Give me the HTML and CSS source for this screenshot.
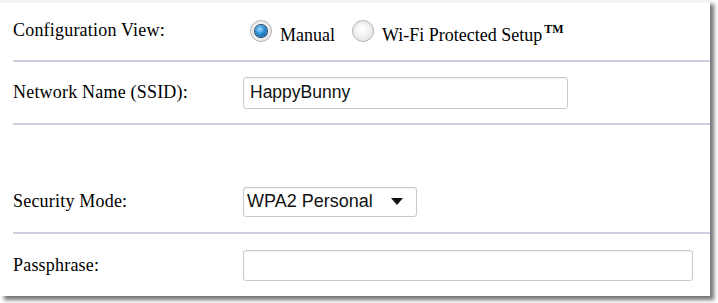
FILE: index.html
```html
<!DOCTYPE html>
<html>
<head>
<meta charset="utf-8">
<link rel="stylesheet" href="styles.css">
</head>
<body>
<div class="panel">
  <div class="row row-config">
    <div class="label">Configuration View:</div>
    <div class="control radios">
      <span class="radio checked"></span><span class="rlabel">Manual</span>
      <span class="radio"></span><span class="rlabel">Wi-Fi Protected Setup<sup>TM</sup></span>
    </div>
  </div>
  <div class="row row-ssid">
    <div class="label">Network Name (SSID):</div>
    <div class="control"><div class="field ssid">HappyBunny</div></div>
  </div>
  <div class="row row-security">
    <div class="label">Security Mode:</div>
    <div class="control"><div class="field select">WPA2 Personal<span class="arrow"></span></div></div>
  </div>
  <div class="row row-pass last">
    <div class="label">Passphrase:</div>
    <div class="control"><div class="field pass"></div></div>
  </div>
</div>
</body>
</html>
```
FILE: styles.css
```css
html, body {
  margin: 0;
  padding: 0;
  background: #ffffff;
}
body {
  width: 718px;
  height: 303px;
  overflow: hidden;
}
.panel {
  width: 710px;
  height: 293px;
  border-top: 3px solid #f4f4f4;
  background: #fff;
  box-shadow: 4px 4px 4px rgba(0, 0, 0, 0.55);
  font-family: "Liberation Serif", "Times New Roman", serif;
  font-size: 18px;
  color: #000;
}
.row {
  display: flex;
  align-items: center;
  margin-left: 13px;
  border-bottom: 2px solid #cfcfe2;
  box-sizing: border-box;
}
.row.last { border-bottom: none; }
.row-config { height: 59px; padding-bottom: 2px; }
.row-ssid { height: 63px; }
.row-security { height: 109px; padding-top: 46px; }
.row-pass { height: 62px; padding-bottom: 0; }
.label {
  width: 230px;
  flex: none;
  letter-spacing: 0.2px;
}
.control {
  display: flex;
  align-items: center;
}
.radios { padding-left: 7px; }
.radio {
  width: 22px;
  height: 22px;
  flex: none;
  border-radius: 50%;
  box-sizing: border-box;
  border: 1px solid #b5b5b5;
  background: radial-gradient(circle at 45% 40%, #ffffff 0%, #f0f0f0 50%, #d2d2d2 100%);
  box-shadow: inset 0 0 0 2px #eaeaea;
  position: relative;
}
.radio.checked::after {
  content: "";
  position: absolute;
  left: 4px;
  top: 4px;
  width: 12px;
  height: 12px;
  border-radius: 50%;
  background: radial-gradient(circle at 40% 35%, #9fd8ff 0%, #2a8fd6 45%, #0a4f8a 100%);
  box-shadow: 0 0 0 1px #1c3f66;
}
.rlabel {
  margin: 10px 17px 0 8px;
}
.rlabel sup {
  font-size: 12px;
  font-weight: bold;
  vertical-align: 8px;
  line-height: 0;
  margin-left: 2px;
}
.field {
  box-sizing: border-box;
  border: 1px solid #c9c9c9;
  border-radius: 3px;
  box-shadow: inset 0 1px 1px rgba(0, 0, 0, 0.06);
  background: #fff;
  font-family: "Liberation Sans", Arial, sans-serif;
  font-size: 17.5px;
  color: #111;
  display: flex;
  align-items: center;
  padding-left: 6px;
}
.ssid { width: 325px; height: 32px; }
.select { width: 174px; height: 30px; padding-left: 3px; font-size: 18px; }
.pass { width: 450px; height: 31px; }
.arrow {
  margin-left: 18px;
  width: 0;
  height: 0;
  border-left: 6px solid transparent;
  border-right: 6px solid transparent;
  border-top: 7px solid #111;
}
```
